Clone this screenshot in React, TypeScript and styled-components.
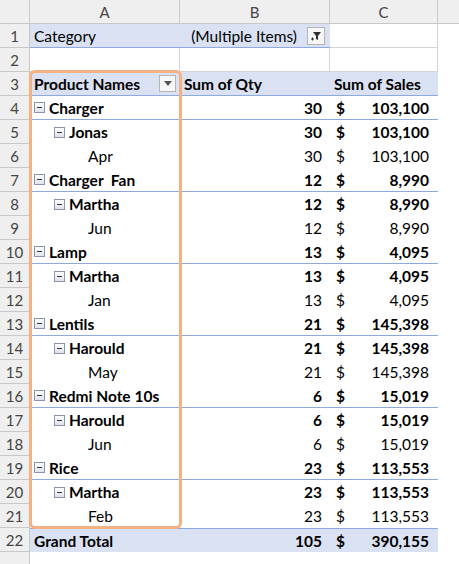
import React from "react";
import styled, { createGlobalStyle } from "styled-components";

const Global = createGlobalStyle`
  body { margin: 0; background: #fff; font-family: Lato, "Open Sans", sans-serif; }
`;

const BLUE = "#d9e1f2";
const LINE = "#8ea9db";
const GRID = "#d4d4d4";

const Sheet = styled.div`
  position: relative;
  display: grid;
  grid-template-columns: 30px 150px 150px 108px 21px;
  grid-auto-rows: 24px;
  width: 459px;
  font-size: 15.5px;
  color: #000;
`;

const Head = styled.div`
  background: #efefef;
  border-right: 1px solid #c8c8c8;
  border-bottom: 1px solid #c8c8c8;
  display: flex;
  align-items: center;
  justify-content: center;
  color: #444;
  font-size: 15px;
  box-sizing: border-box;
`;

const Cell = styled.div<{
  $fill?: boolean;
  $bold?: boolean;
  $grid?: boolean;
  $line?: boolean;
  $top?: boolean;
  $align?: "left" | "right";
  $indent?: number;
}>`
  box-sizing: border-box;
  display: flex;
  align-items: center;
  justify-content: ${(p) => (p.$align === "right" ? "flex-end" : "flex-start")};
  padding: 0 8px 0 ${(p) => 4 + (p.$indent || 0)}px;
  background: ${(p) => (p.$fill ? BLUE : "#fff")};
  font-weight: ${(p) => (p.$bold ? 700 : 400)};
  border-right: ${(p) => (p.$grid ? `1px solid ${GRID}` : "none")};
  border-top: ${(p) => (p.$top ? `1px solid ${LINE}` : "none")};
  border-bottom: ${(p) =>
    p.$line ? `1px solid ${LINE}` : p.$grid ? `1px solid ${GRID}` : "none"};
  white-space: pre;
  gap: 4px;
`;

const Money = styled(Cell)`
  justify-content: space-between;
  padding: 0 9px 0 6px;
`;

const Toggle = styled.span`
  width: 9px;
  height: 9px;
  border: 1px solid #8a96ad;
  background: linear-gradient(#fff, #dde3ec);
  position: relative;
  flex: none;
  &::after {
    content: "";
    position: absolute;
    left: 2px;
    right: 2px;
    top: 4px;
    height: 1px;
    background: #333;
  }
`;

const DropBtn = styled.span<{ $size?: number }>`
  width: ${(p) => p.$size || 18}px;
  height: ${(p) => p.$size || 18}px;
  border: 1px solid #b5b5b5;
  background: #f7f7f7;
  display: flex;
  align-items: center;
  justify-content: center;
  margin-left: 6px;
  box-sizing: border-box;
`;

const Highlight = styled.div`
  position: absolute;
  left: 29px;
  top: 70px;
  width: 153px;
  height: 459px;
  border: 3px solid #f4b183;
  border-radius: 6px;
  box-sizing: border-box;
  pointer-events: none;
`;

type Row = { label: string; level: number; qty: number; sales: string };

const rows: Row[] = [
  { label: "Charger", level: 1, qty: 30, sales: "103,100" },
  { label: "Jonas", level: 2, qty: 30, sales: "103,100" },
  { label: "Apr", level: 3, qty: 30, sales: "103,100" },
  { label: "Charger  Fan", level: 1, qty: 12, sales: "8,990" },
  { label: "Martha", level: 2, qty: 12, sales: "8,990" },
  { label: "Jun", level: 3, qty: 12, sales: "8,990" },
  { label: "Lamp", level: 1, qty: 13, sales: "4,095" },
  { label: "Martha", level: 2, qty: 13, sales: "4,095" },
  { label: "Jan", level: 3, qty: 13, sales: "4,095" },
  { label: "Lentils", level: 1, qty: 21, sales: "145,398" },
  { label: "Harould", level: 2, qty: 21, sales: "145,398" },
  { label: "May", level: 3, qty: 21, sales: "145,398" },
  { label: "Redmi Note 10s", level: 1, qty: 6, sales: "15,019" },
  { label: "Harould", level: 2, qty: 6, sales: "15,019" },
  { label: "Jun", level: 3, qty: 6, sales: "15,019" },
  { label: "Rice", level: 1, qty: 23, sales: "113,553" },
  { label: "Martha", level: 2, qty: 23, sales: "113,553" },
  { label: "Feb", level: 3, qty: 23, sales: "113,553" },
];

const Filter = () => (
  <svg width="12" height="12" viewBox="0 0 12 12">
    <path d="M3 2h8L8 6v4L6 9V6z" fill="#333" />
    <path d="M1 9h3M2.5 7.5v3" stroke="#333" strokeWidth="1" fill="none" />
  </svg>
);

const Caret = () => (
  <svg width="8" height="5" viewBox="0 0 8 5">
    <path d="M0 0h8L4 5z" fill="#555" />
  </svg>
);

export default function App() {
  return (
    <>
      <Global />
      <Sheet>
        <Head />
        <Head>A</Head>
        <Head>B</Head>
        <Head>C</Head>
        <Head style={{ borderRight: "none" }} />

        <Head>1</Head>
        <Cell $fill $line>Category</Cell>
        <Cell $fill $line $align="right" style={{ paddingRight: 5 }}>
          (Multiple Items)
          <DropBtn><Filter /></DropBtn>
        </Cell>
        <Cell $grid />
        <Cell />

        <Head>2</Head>
        <Cell $grid />
        <Cell $grid />
        <Cell $grid />
        <Cell />

        <Head>3</Head>
        <Cell $fill $bold $line style={{ justifyContent: "space-between", paddingRight: 4 }}>
          Product Names
          <DropBtn $size={17}><Caret /></DropBtn>
        </Cell>
        <Cell $fill $bold $line>Sum of Qty</Cell>
        <Cell $fill $bold $line>Sum of Sales</Cell>
        <Cell />

        {rows.map((r, i) => {
          const bold = r.level < 3;
          const line = r.level === 1;
          const indent = r.level === 1 ? 0 : r.level === 2 ? 20 : 54;
          return (
            <React.Fragment key={i}>
              <Head>{i + 4}</Head>
              <Cell $bold={bold} $line={line} $indent={indent}>
                {r.level < 3 && <Toggle />}
                {r.label}
              </Cell>
              <Cell $bold={bold} $line={line} $align="right">{r.qty}</Cell>
              <Money $bold={bold} $line={line}>
                <span>$</span>
                <span>{r.sales}</span>
              </Money>
              <Cell />
            </React.Fragment>
          );
        })}

        <Head>22</Head>
        <Cell $fill $bold $top>Grand Total</Cell>
        <Cell $fill $bold $top $align="right">105</Cell>
        <Money $fill $bold $top>
          <span>$</span>
          <span>390,155</span>
        </Money>
        <Cell />

        <Head style={{ borderBottom: "none" }} />
        <Cell /><Cell /><Cell /><Cell />
        <Highlight />
      </Sheet>
    </>
  );
}
